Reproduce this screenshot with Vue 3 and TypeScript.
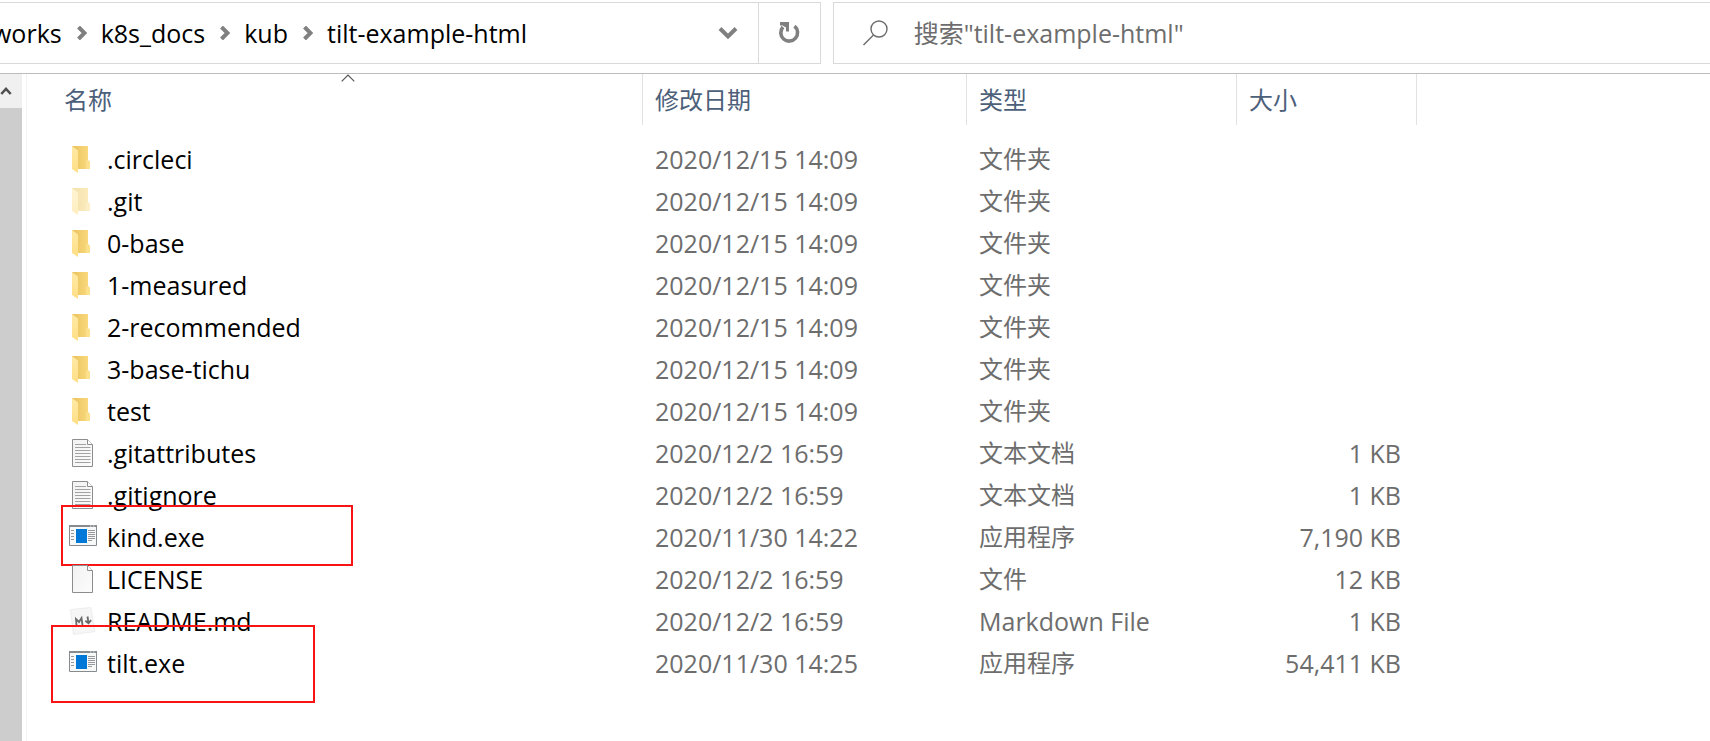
<script setup lang="ts">
type Kind = 'folder' | 'hidden' | 'text' | 'exe' | 'blank' | 'md'

interface Entry {
  name: string
  kind: Kind
  date: string
  type: string
  size: string
  mark?: string
}

const crumbs: string[] = ['works', 'k8s_docs', 'kub', 'tilt-example-html']

const folder = (name: string, kind: Kind = 'folder'): Entry => ({
  name, kind, date: '2020/12/15 14:09', type: '文件夹', size: '',
})

const entries: Entry[] = [
  folder('.circleci'),
  folder('.git', 'hidden'),
  folder('0-base'),
  folder('1-measured'),
  folder('2-recommended'),
  folder('3-base-tichu'),
  folder('test'),
  { name: '.gitattributes', kind: 'text', date: '2020/12/2 16:59', type: '文本文档', size: '1 KB' },
  { name: '.gitignore', kind: 'text', date: '2020/12/2 16:59', type: '文本文档', size: '1 KB' },
  { name: 'kind.exe', kind: 'exe', date: '2020/11/30 14:22', type: '应用程序', size: '7,190 KB', mark: 'mark-kind' },
  { name: 'LICENSE', kind: 'blank', date: '2020/12/2 16:59', type: '文件', size: '12 KB' },
  { name: 'README.md', kind: 'md', date: '2020/12/2 16:59', type: 'Markdown File', size: '1 KB' },
  { name: 'tilt.exe', kind: 'exe', date: '2020/11/30 14:25', type: '应用程序', size: '54,411 KB', mark: 'mark-tilt' },
]

const isCjk = (text: string): boolean => /[\u4e00-\u9fff]/.test(text)
</script>

<template>
  <div class="explorer">
    <header class="toolbar">
      <div class="address">
        <nav class="crumbs" aria-label="路径">
          <template v-for="(crumb, i) in crumbs" :key="crumb">
            <svg v-if="i > 0" class="sep" viewBox="0 0 10 14" aria-hidden="true"><path d="M1.500 1 7.500 7l-6 6" /></svg>
            <a href="#" class="crumb">{{ crumb }}</a>
          </template>
        </nav>
        <button class="drop" type="button" aria-label="历史记录">
          <svg width="20" height="14" viewBox="0 0 20 14"><path d="M2 2.500 10 10.500l8-8" fill="none" stroke="#808080" stroke-width="4" /></svg>
        </button>
        <button class="refresh" type="button" aria-label="刷新">
          <svg width="22" height="24" viewBox="0 0 22 24">
            <path d="M16.500 5.200A8.400 8.400 0 1 1 5 6" fill="none" stroke="#808080" stroke-width="3.600" />
            <path d="M2 1h9v9.500H8V6.500L4.500 4.500H2z" fill="#808080" />
          </svg>
        </button>
      </div>
      <label class="search">
        <svg width="26" height="26" viewBox="0 0 26 26" aria-hidden="true"><g fill="none" stroke="#6d6d6d" stroke-width="1.400"><circle cx="17" cy="9" r="8" /><path d="M11.500 15 1.500 25" /></g></svg>
        <input type="text" aria-label="搜索" placeholder="搜索&quot;tilt-example-html&quot;" />
      </label>
    </header>

    <main class="body">
      <div class="scroll">
        <button type="button" aria-label="向上滚动">
          <svg width="14" height="12" viewBox="0 0 14 12"><path d="M1.500 9.500 7 3.500l5.500 6" fill="none" stroke="#505050" stroke-width="3" /></svg>
        </button>
        <div class="thumb"></div>
      </div>
      <div class="list">
        <table>
          <colgroup>
            <col class="c-name" /><col class="c-date" /><col class="c-type" /><col class="c-size" /><col />
          </colgroup>
          <thead>
            <tr>
              <th scope="col" class="name">
                名称
                <svg class="sort" width="14" height="8" viewBox="0 0 14 8" aria-hidden="true"><path d="M.7 7.300 7 1l6.300 6.300" fill="none" stroke="#555" stroke-width="1.200" /></svg>
              </th>
              <th scope="col">修改日期</th>
              <th scope="col">类型</th>
              <th scope="col">大小</th>
              <td></td>
            </tr>
          </thead>
          <tbody>
            <tr v-for="e in entries" :key="e.name">
              <td class="name">
                <div class="file">
                  <svg class="icon" width="28" height="28" viewBox="0 0 28 28" aria-hidden="true">
                    <defs>
                      <linearGradient id="fold" x1="0" x2="1"><stop offset="0" stop-color="#e9c15d" /><stop offset="1" stop-color="#fbdc7f" /></linearGradient>
                      <linearGradient id="flap" x1="0" x2="0" y1="0" y2="1"><stop offset="0" stop-color="#ffe9a6" /><stop offset="1" stop-color="#ffdf85" /></linearGradient>
                      <linearGradient id="paper" x1="0" y1="0" x2="1" y2="1"><stop offset="0" stop-color="#f2f2f2" /><stop offset="1" stop-color="#fcfcfc" /></linearGradient>
                    </defs>
                    <g v-if="e.kind === 'folder' || e.kind === 'hidden'" :opacity="e.kind === 'hidden' ? 0.5 : 1">
                      <path d="M3 1h16v14l2 2v7H3z" fill="url(#fold)" />
                      <path d="M17 15.500h2.500l1.500 2V24h-4z" fill="#fce08c" />
                      <path d="M3 1l6 4.500V28l-6-4z" fill="url(#flap)" />
                    </g>
                    <g v-else-if="e.kind === 'text' || e.kind === 'blank'">
                      <path d="M3.500.5h15l5 5v22h-20z" fill="url(#paper)" stroke="#8d8d8d" />
                      <path d="M18.500.5v5h5" fill="#fff" stroke="#8d8d8d" />
                      <path v-if="e.kind === 'text'" d="M6 5.500h11M6 8.500h15.500M6 11.500h15.500M6 14.500h15.500M6 17.500h15.500M6 20.500h15.500M6 23.500h15.500" stroke="#a2a2a2" />
                    </g>
                    <g v-else-if="e.kind === 'exe'">
                      <path d="M.5 2.500h27v20H.5z" fill="#f7f8f8" stroke="#868b90" />
                      <path d="M0 2h28v2H0z" fill="#868b90" />
                      <path d="M21 3h1.500M24 3h1.500" stroke="#dfe3e6" />
                      <path d="M7 6h11v14H7z" fill="#0078d7" />
                      <path d="M2 7.500h3M2 10.500h3M2 13.500h3M2 16.500h3M19 7.500h7M19 9.500h7M19 11.500h7M19 13.500h7M19 15.500h7M19 17.500h4" stroke="#96999c" />
                    </g>
                    <g v-else>
                      <path d="M1.500 2.500 22 .5l4 24L4.500 27.500z" fill="#f6f6f6" stroke="#ededed" />
                      <path d="M7.500 18.500 7 12l3 3 2.500-4 1 7M18.500 9.500l.9 6M16.300 13.800l3.200 2.500 2.600-3.200" fill="none" stroke="#6a6a6a" stroke-width="1.800" />
                    </g>
                  </svg>
                  <span>{{ e.name }}</span>
                  <span v-if="e.mark" :class="['mark', e.mark]"></span>
                </div>
              </td>
              <td>{{ e.date }}</td>
              <td :class="{ cjk: isCjk(e.type) }">{{ e.type }}</td>
              <td class="size">{{ e.size }}</td>
              <td></td>
            </tr>
          </tbody>
        </table>
      </div>
    </main>
  </div>
</template>

<style>
body {
  margin: 0;
  background: #fff;
}
</style>

<style scoped>
.explorer {
  min-height: 100vh;
  display: flex;
  flex-direction: column;
  overflow: hidden;
  font-family: "Open Sans", "Noto Sans CJK SC", sans-serif;
  font-size: 25px;
  line-height: 42px;
  color: #000;
}
button {
  padding: 0;
  border: 0;
  background: none;
  display: flex;
  align-items: center;
  justify-content: center;
}
.toolbar {
  display: grid;
  grid-template-columns: 29fr 31fr;
  gap: 12px;
  padding: 2px 0 9px;
  border-bottom: 1px solid #bcbcbc;
}
.address,
.search {
  height: 60px;
  border: 1px solid #d9d9d9;
  display: flex;
  align-items: stretch;
}
.address {
  border-left: 0;
  min-width: 0;
}
.crumbs {
  flex: 1;
  min-width: 0;
  display: flex;
  align-items: center;
  margin-left: -8px;
  white-space: nowrap;
}
.crumb {
  color: #000;
  text-decoration: none;
}
.sep {
  width: 10px;
  height: 14px;
  margin: 0 14px 0 15px;
}
.sep path {
  fill: none;
  stroke: #808080;
  stroke-width: 4;
}
.drop {
  width: 60px;
}
.refresh {
  width: 62px;
  border-left: 1px solid #d9d9d9;
}
.search {
  border-right: 0;
  align-items: center;
  gap: 26px;
  padding-left: 28px;
}
.search svg {
  flex: none;
}
.search input {
  flex: 1;
  min-width: 0;
  padding: 0;
  border: 0;
  outline: 0;
  background: none;
  font: inherit;
}
.search input::placeholder {
  color: #6d6d6d;
  opacity: 1;
}
.body {
  flex: 1;
  display: flex;
}
.scroll {
  width: 22px;
  flex: none;
  display: flex;
  flex-direction: column;
  background: #f0f0f0;
}
.scroll button {
  height: 34px;
  padding-right: 10px;
}
.thumb {
  flex: 1;
  background: #cdcdcd;
}
.list {
  flex: 1;
  min-width: 0;
  margin-left: 4px;
  border-left: 1px solid #f3f3f3;
}
table {
  width: 100%;
  table-layout: fixed;
  border-collapse: separate;
  border-spacing: 0;
}
.c-name { width: 616px; }
.c-date { width: 324px; }
.c-type { width: 270px; }
.c-size { width: 180px; }
th,
td {
  padding: 0 0 0 12px;
  white-space: nowrap;
  text-align: left;
}
th {
  position: relative;
  height: 51px;
  box-sizing: border-box;
  border-right: 1px solid #e2e2e2;
  color: #4c607a;
  font-size: 24px;
  font-weight: 400;
  line-height: 48px;
}
th.name {
  padding-left: 37px;
}
.sort {
  position: absolute;
  top: 0;
  left: 50%;
  margin-left: 6px;
}
tbody::before {
  content: "";
  display: block;
  height: 13px;
}
td {
  height: 42px;
  color: #6d6d6d;
}
td.name {
  padding-left: 42px;
  color: #000;
}
td.cjk {
  font-size: 24px;
}
td.size {
  padding: 0 16px 0 0;
  text-align: right;
}
.file {
  position: relative;
  height: 42px;
  display: flex;
  align-items: center;
  gap: 10px;
}
.mark {
  position: absolute;
  border: 2px solid #f81414;
}
.mark-kind {
  top: -11px;
  left: -8px;
  width: 288px;
  height: 57px;
}
.mark-tilt {
  top: -17px;
  left: -18px;
  width: 260px;
  height: 74px;
}
</style>
